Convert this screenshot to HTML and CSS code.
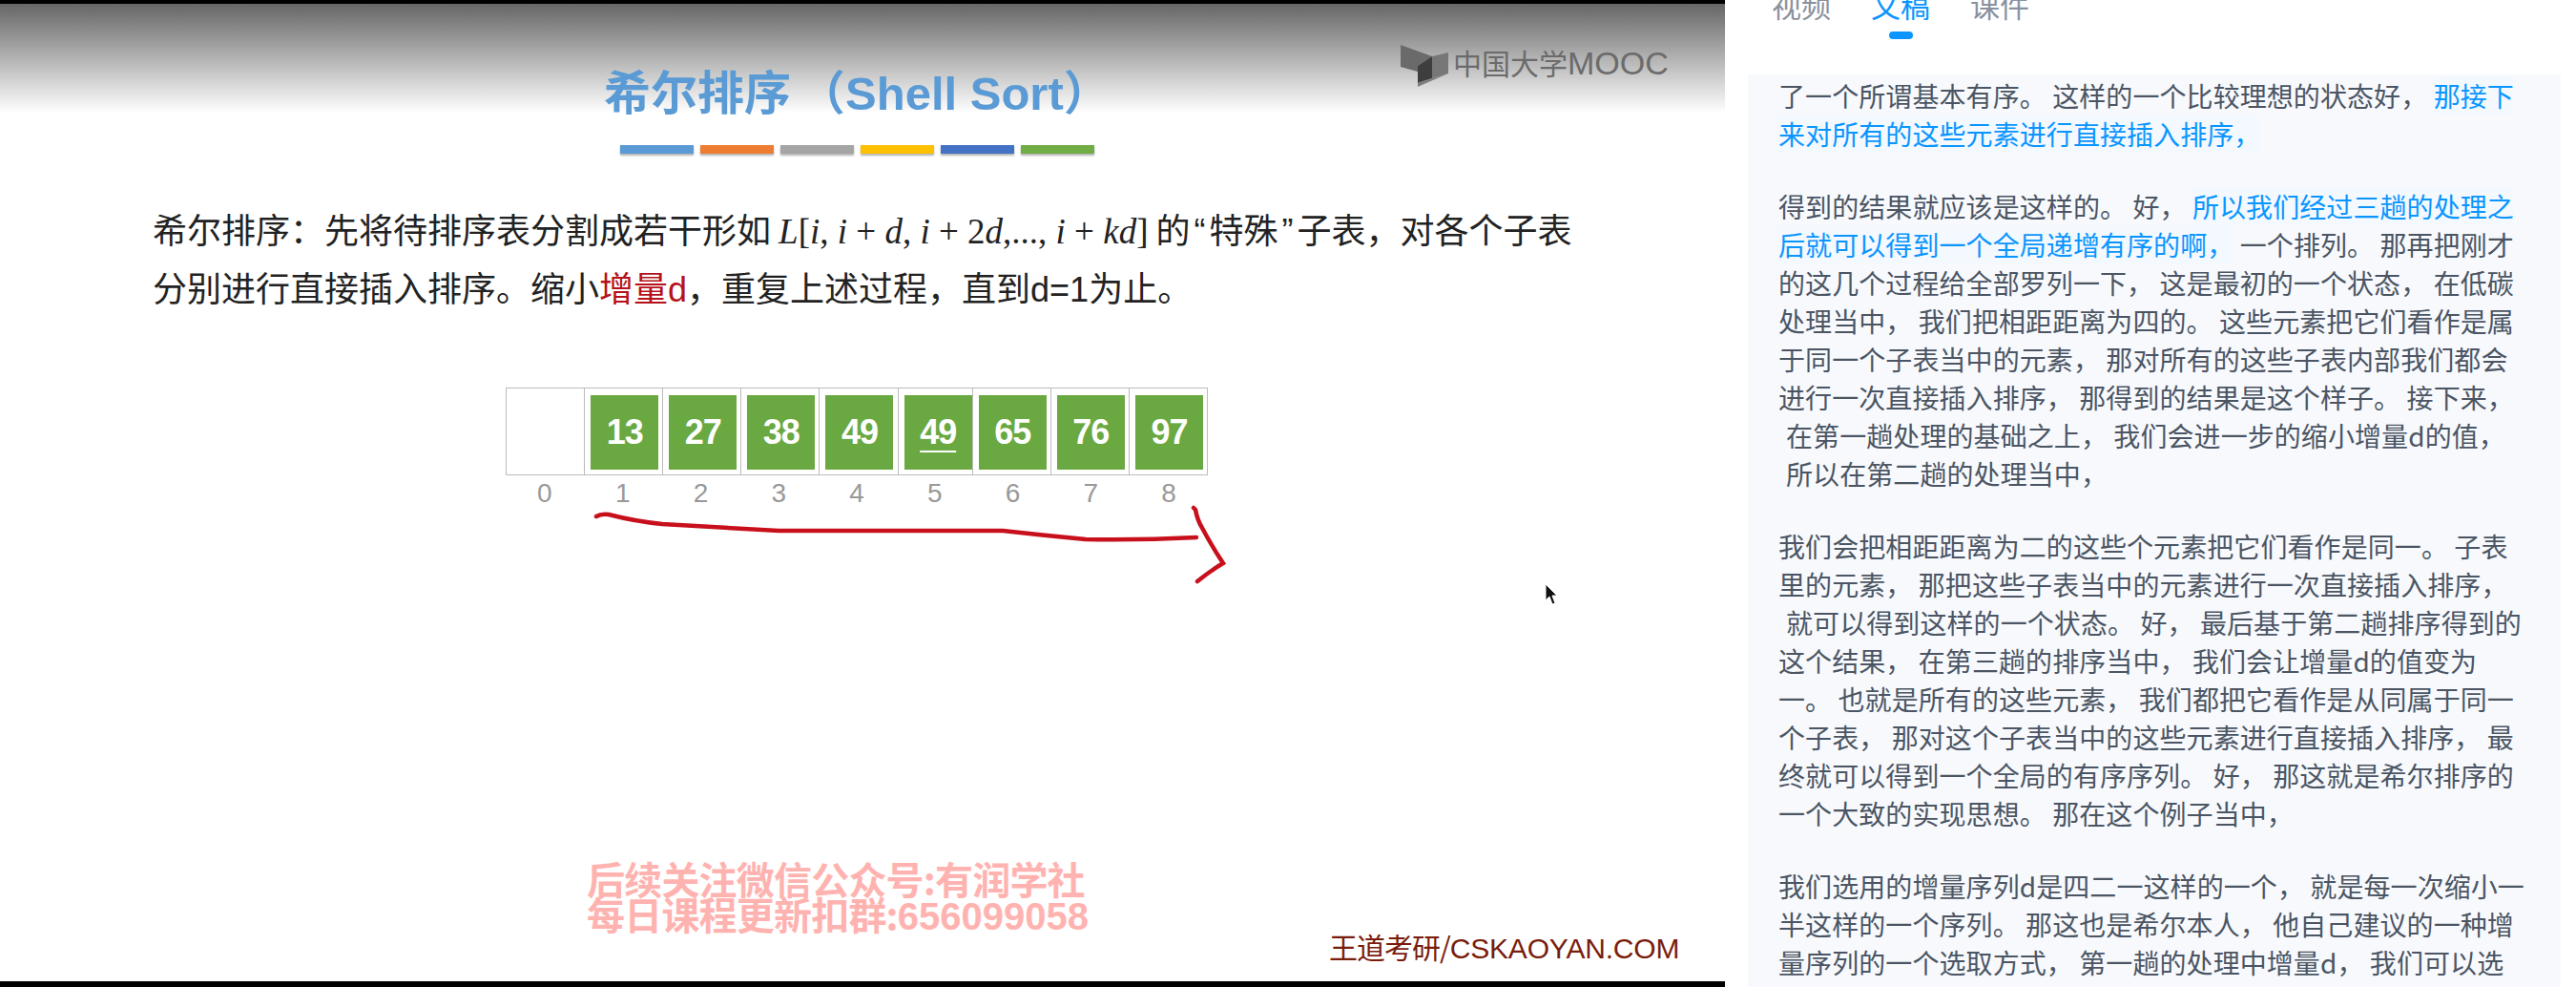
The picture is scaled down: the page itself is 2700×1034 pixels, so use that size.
FILE: index.html

```html
<!DOCTYPE html>
<html lang="zh-CN">
<head>
  <meta charset="UTF-8">
  <title>希尔排序（Shell Sort）</title>
  <link rel="stylesheet" href="styles.css">
</head>

<body>
<div class="page">

  <div class="video">
    <div class="slide">
      <div class="slide-head">
        <h1 class="title">希尔排序<span class="paren">（</span><span class="latin title-en">Shell Sort</span>）</h1>
        <div class="logo">
          <svg class="logo-icon" width="50" height="44" viewBox="0 0 50 44">
            <path d="M0 0L33 12L18 22L18 28L0 23Z" fill="#6a6a6a"/>
            <path d="M33 12L50 8L50 30L33 35Z" fill="#777"/>
            <path d="M18 22L33 12L33 35L18 40Z" fill="#3e3e3e"/>
            <path d="M18 28L18 44L20 43L50 30L33 35L18 40Z" fill="#7d7d7d"/>
          </svg>
          <span class="logo-text">中国大学<span class="latin">MOOC</span></span>
        </div>
      </div>

      <div class="strips">
        <i class="strip c1"></i><i class="strip c2"></i><i class="strip c3"></i>
        <i class="strip c4"></i><i class="strip c5"></i><i class="strip c6"></i>
      </div>

      <div class="intro">
        <p>希尔排序：先将待排序表分割成若干形如 <span class="formula"><em>L</em>[<em>i</em>, <em>i</em> + <em>d</em>, <em>i</em> + 2<em>d</em>,..., <em>i</em> + <em>kd</em>]</span> 的<span class="latin quote">“</span>特殊<span class="latin quote">”</span>子表，对各个子表</p>
        <p>分别进行直接插入排序。缩小<span class="red">增量<span class="latin">d</span></span>，重复上述过程，直到<span class="latin">d=1</span>为止。</p>
      </div>

      <div class="array">
        <div class="cells">
          <div class="cell"></div>
          <div class="cell"><b class="num">13</b></div>
          <div class="cell"><b class="num">27</b></div>
          <div class="cell"><b class="num">38</b></div>
          <div class="cell"><b class="num">49</b></div>
          <div class="cell cell-end"><b class="num"><u>49</u></b></div>
          <div class="cell"><b class="num">65</b></div>
          <div class="cell"><b class="num">76</b></div>
          <div class="cell"><b class="num">97</b></div>
        </div>
        <div class="labels">
          <span>0</span><span>1</span><span>2</span><span>3</span><span>4</span><span>5</span><span>6</span><span>7</span><span>8</span>
        </div>
      </div>

      <!-- pen stroke drawn over the slide -->
      <svg class="pen" width="1808" height="1034" viewBox="0 0 1808 1034">
        <path d="M625 541Q630 538 638 539Q665 546 694 549Q760 553 816 556L1051 556Q1095 561 1138 565Q1195 566 1254 563" />
        <path d="M1251 532L1253 534Q1255 545 1260 553Q1270 572 1282 590Q1270 597 1255 609" />
      </svg>

      <svg class="cursor" width="14" height="24" viewBox="0 0 14 24">
        <path d="M1 1L1 18L5 14L8 22L11 21L8 13L13 13Z" fill="#111" stroke="#fff" stroke-width="1"/>
      </svg>

      <div class="notice">
        <div>后续关注微信公众号:有润学社</div>
        <div>每日课程更新扣群:<span class="latin">656099058</span></div>
      </div>
      <div class="brand">王道考研/<span class="latin">CSKAOYAN.COM</span></div>
    </div>
  </div>

  <div class="side">
    <div class="tabs">
      <div class="tab">视频</div>
      <div class="tab active">文稿</div>
      <div class="tab">课件</div>
    </div>

    <div class="transcript">
      <div class="para">
        <div>了一个所谓基本有序。 这样的一个比较理想的状态好， <span class="hl">那接下</span></div>
        <div><span class="hl">来对所有的这些元素进行直接插入排序，</span></div>
      </div>
      <div class="para">
        <div>得到的结果就应该是这样的。 好， <span class="hl">所以我们经过三趟的处理之</span></div>
        <div><span class="hl">后就可以得到一个全局递增有序的啊，</span> 一个排列。 那再把刚才</div>
        <div>的这几个过程给全部罗列一下， 这是最初的一个状态， 在低碳</div>
        <div>处理当中， 我们把相距距离为四的。 这些元素把它们看作是属</div>
        <div>于同一个子表当中的元素， 那对所有的这些子表内部我们都会</div>
        <div>进行一次直接插入排序， 那得到的结果是这个样子。 接下来，</div>
        <div class="in">在第一趟处理的基础之上， 我们会进一步的缩小增量d的值，</div>
        <div class="in">所以在第二趟的处理当中，</div>
      </div>
      <div class="para">
        <div>我们会把相距距离为二的这些个元素把它们看作是同一。 子表</div>
        <div>里的元素， 那把这些子表当中的元素进行一次直接插入排序，</div>
        <div class="in">就可以得到这样的一个状态。 好， 最后基于第二趟排序得到的</div>
        <div>这个结果， 在第三趟的排序当中， 我们会让增量d的值变为</div>
        <div>一。 也就是所有的这些元素， 我们都把它看作是从同属于同一</div>
        <div>个子表， 那对这个子表当中的这些元素进行直接插入排序， 最</div>
        <div>终就可以得到一个全局的有序序列。 好， 那这就是希尔排序的</div>
        <div>一个大致的实现思想。 那在这个例子当中，</div>
      </div>
      <div class="para">
        <div>我们选用的增量序列d是四二一这样的一个， 就是每一次缩小一</div>
        <div>半这样的一个序列。 那这也是希尔本人， 他自己建议的一种增</div>
        <div>量序列的一个选取方式， 第一趟的处理中增量d， 我们可以选</div>
      </div>
    </div>
  </div>

</div>
</body>
</html>
```

FILE: styles.css

```css
html, body { margin: 0; height: 100%; overflow: hidden; background: #fff; }
body { font-family: "Noto Sans CJK SC", "Noto Sans", sans-serif; }
p, h1 { margin: 0; }
.latin { font-family: "Liberation Sans", Arial, sans-serif; }

.page { display: flex; width: 2700px; height: 1034px; overflow: hidden; }

/* left: the video */
.video { width: 1808px; height: 1034px; flex: none; background: #000; padding: 4px 0 6px; box-sizing: border-box; }
.slide { position: relative; height: 1024px; overflow: hidden; padding-top: 59px; box-sizing: border-box;
  background: linear-gradient(#666 0, #fff 114px); }

.slide-head { display: flex; align-items: flex-start; height: 68px; }
.title { margin-left: 633px; width: 835px; height: 68px; flex: none; font-size: 49px; line-height: 62px; font-weight: 700; color: #5b9bd5; white-space: nowrap; }
.paren { margin-left: 8px; }
.logo { display: flex; margin-top: -16px; color: #6b6b6b; }
.logo-icon { flex: none; margin-right: 5px; }
.logo-text { font-size: 30px; line-height: 40px; height: 40px; margin-top: -2px; white-space: nowrap; }
.logo-text .latin { font-size: 34px; }

.strips { display: flex; gap: 7px; margin: 21px 0 0 650px; }
.strip { display: block; width: 77px; height: 9px; box-shadow: 0 2px 2px rgba(0,0,0,.3); }
.c1 { background: #5b9bd5; }
.c2 { background: #ed7d31; }
.c3 { background: #a5a5a5; }
.c4 { background: #ffc000; }
.c5 { background: #4472c4; }
.c6 { background: #70ad47; }

.intro { margin: 48px 0 0 160px; font-size: 36px; line-height: 61px; color: #222; white-space: nowrap; }
.intro p { height: 61px; }
.formula { font-family: "Liberation Serif", "Times New Roman", serif; font-size: 37px; }
.quote { padding: 0 4px; }
.red { color: #b5121b; }

.array { width: 736px; margin: 75px 0 0 530px; }
.cells { display: flex; height: 92px; border: 1px solid #bbb; box-sizing: border-box; }
.cell { flex: 1; display: flex; justify-content: center; padding: 7px 4px 5px 6px; border-left: 1px solid #bbb; box-sizing: border-box; }
.cell:first-child { border-left: 0; }
.cell-end { justify-content: flex-end; padding-right: 0; }
.num { width: 71px; background: #6aa842; color: #fff; font-family: "Liberation Sans", Arial, sans-serif; font-size: 36px; font-weight: 700; letter-spacing: -1px; line-height: 78px; text-align: center; }
.num u { text-underline-offset: 7px; text-decoration-thickness: 2px; }
.labels { display: flex; margin-top: 1px; color: #999; font-family: "Liberation Sans", Arial, sans-serif; font-size: 28px; line-height: 36px; text-align: center; }
.labels span { flex: 1; }

.pen { position: absolute; left: 0; top: -4px; fill: none; stroke: #c8101c; stroke-width: 4.5px; stroke-linecap: round; }
.cursor { position: absolute; left: 1619px; top: 607px; }

.notice { position: absolute; left: 615px; top: 898px; font-size: 40px; line-height: 37px; font-weight: 700; color: #ffb3b0; letter-spacing: -.8px; white-space: nowrap; }
.notice .latin { letter-spacing: 0; }
.brand { position: absolute; left: 1393px; top: 965px; font-size: 30px; line-height: 44px; color: #7a1c0c; letter-spacing: -1px; white-space: nowrap; }
.brand .latin { letter-spacing: -.2px; }

/* right: transcript panel */
.side { flex: 1; min-width: 0; display: flex; flex-direction: column; }
.tabs { display: flex; gap: 42px; padding-left: 49px; box-sizing: border-box; font-size: 31px; line-height: 44px; color: #8a919e; margin-top: -17px; height: 95px; }
.tab { position: relative; }
.tab.active { color: #0a95ff; }
.tab.active::after { content: ""; position: absolute; left: 19px; top: 50px; width: 25px; height: 8px; border-radius: 4px; background: #0a95ff; }

.transcript { flex: 1; margin: 0 16px 0 24px; padding: 2px 32px 0 32px; background: #f7f9fd; font-size: 28px; line-height: 40px; letter-spacing: .08px; color: #4b5563; white-space: nowrap; overflow: hidden; }
.para { margin-bottom: 36px; }
.in { padding-left: 8px; }
.hl { color: #0a95ff; background: #f3f9fe; }
```
